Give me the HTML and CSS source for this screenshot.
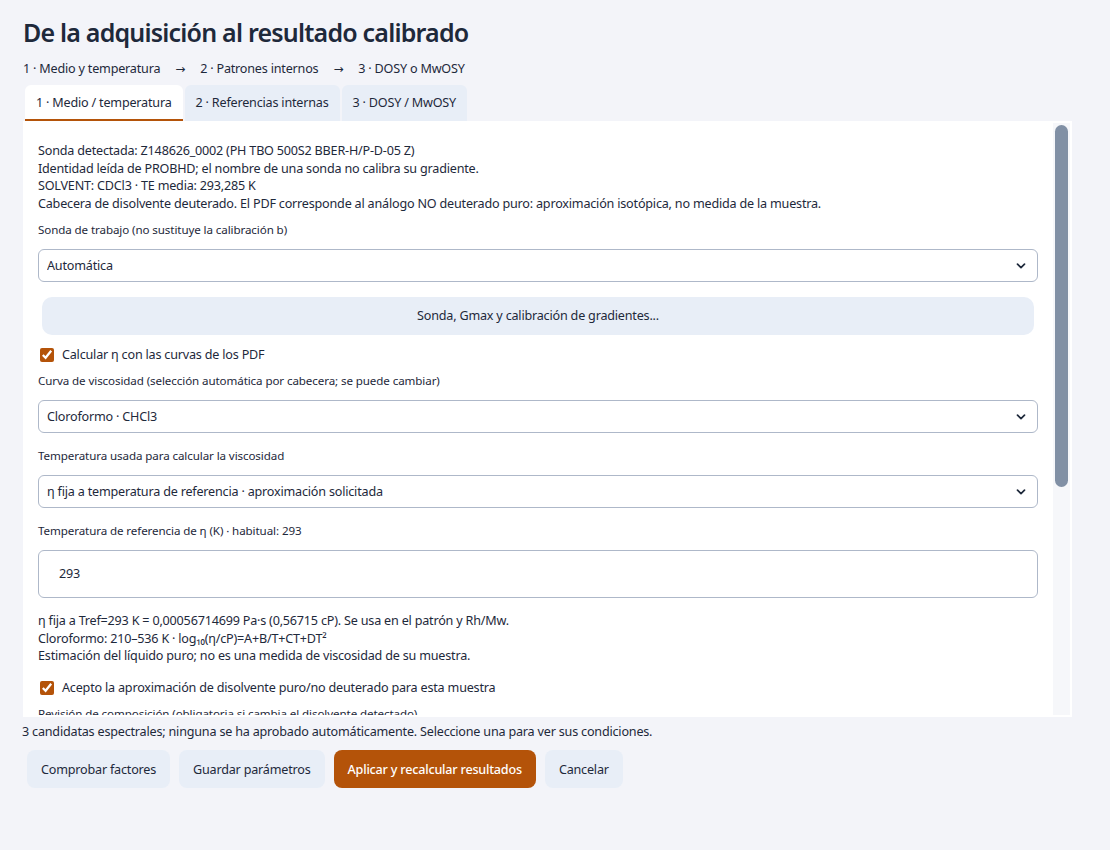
FILE: index.html
```html
<!DOCTYPE html>
<html lang="es">
<head>
<meta charset="utf-8">
<title>De la adquisición al resultado calibrado</title>
<link rel="stylesheet" href="styles.css">
</head>
<body>
<main class="page">
  <h1 class="title">De la adquisición al resultado calibrado</h1>
  <div class="steps">
    <span>1 · Medio y temperatura</span>
    <span class="arrow">→</span>
    <span>2 · Patrones internos</span>
    <span class="arrow">→</span>
    <span>3 · DOSY o MwOSY</span>
  </div>
  <nav class="tabs">
    <button class="tab tab-active">1 · Medio / temperatura</button>
    <button class="tab">2 · Referencias internas</button>
    <button class="tab">3 · DOSY / MwOSY</button>
  </nav>
  <section class="panel">
    <div class="scroll">
      <div class="info">
        <div>Sonda detectada: Z148626_0002 (PH TBO 500S2 BBER-H/P-D-05 Z)</div>
        <div>Identidad leída de PROBHD; el nombre de una sonda no calibra su gradiente.</div>
        <div>SOLVENT: CDCl3 · TE media: 293,285 K</div>
        <div>Cabecera de disolvente deuterado. El PDF corresponde al análogo NO deuterado puro: aproximación isotópica, no medida de la muestra.</div>
      </div>

      <label class="field-label first">Sonda de trabajo (no sustituye la calibración b)</label>
      <div class="select-wrap">
        <select class="select"><option>Automática</option></select>
        <svg class="chev" width="10" height="6" viewBox="0 0 10 6"><path d="M1.5 1.2l3.5 3.5 3.5-3.5" fill="none" stroke="#1e293b" stroke-width="1.7" stroke-linecap="round" stroke-linejoin="round"/></svg>
      </div>

      <button class="wide-btn">Sonda, Gmax y calibración de gradientes...</button>

      <label class="check check-1"><input type="checkbox" checked> <span>Calcular η con las curvas de los PDF</span></label>

      <label class="field-label tight">Curva de viscosidad (selección automática por cabecera; se puede cambiar)</label>
      <div class="select-wrap">
        <select class="select"><option>Cloroformo · CHCl3</option></select>
        <svg class="chev" width="10" height="6" viewBox="0 0 10 6"><path d="M1.5 1.2l3.5 3.5 3.5-3.5" fill="none" stroke="#1e293b" stroke-width="1.7" stroke-linecap="round" stroke-linejoin="round"/></svg>
      </div>

      <label class="field-label">Temperatura usada para calcular la viscosidad</label>
      <div class="select-wrap">
        <select class="select"><option>η fija a temperatura de referencia · aproximación solicitada</option></select>
        <svg class="chev" width="10" height="6" viewBox="0 0 10 6"><path d="M1.5 1.2l3.5 3.5 3.5-3.5" fill="none" stroke="#1e293b" stroke-width="1.7" stroke-linecap="round" stroke-linejoin="round"/></svg>
      </div>

      <label class="field-label">Temperatura de referencia de η (K) · habitual: 293</label>
      <input class="input" type="text" value="293">

      <div class="info note">
        <div>η fija a Tref=293 K = 0,00056714699 Pa·s (0,56715 cP). Se usa en el patrón y Rh/Mw.</div>
        <div>Cloroformo: 210–536 K · log₁₀(η/cP)=A+B/T+CT+DT²</div>
        <div>Estimación del líquido puro; no es una medida de viscosidad de su muestra.</div>
      </div>

      <label class="check check-2"><input type="checkbox" checked> <span>Acepto la aproximación de disolvente puro/no deuterado para esta muestra</span></label>

      <label class="field-label tight">Revisión de composición (obligatoria si cambia el disolvente detectado)</label>
      <div class="select-wrap">
        <select class="select"><option>Sin cambios · CDCl3</option></select>
        <svg class="chev" width="10" height="6" viewBox="0 0 10 6"><path d="M1.5 1.2l3.5 3.5 3.5-3.5" fill="none" stroke="#1e293b" stroke-width="1.7" stroke-linecap="round" stroke-linejoin="round"/></svg>
      </div>
    </div>
    <div class="track"><div class="thumb"></div></div>
  </section>
  <p class="status">3 candidatas espectrales; ninguna se ha aprobado automáticamente. Seleccione una para ver sus condiciones.</p>
  <div class="actions">
    <button class="btn">Comprobar factores</button>
    <button class="btn">Guardar parámetros</button>
    <button class="btn btn-primary">Aplicar y recalcular resultados</button>
    <button class="btn">Cancelar</button>
  </div>
</main>
</body>
</html>
```

FILE: styles.css
```css
* { box-sizing: border-box; }

html, body {
  margin: 0;
  background: #f3f4f9;
}

body {
  font-family: "Noto Sans", "Open Sans", sans-serif;
  color: #1e293b;
  font-size: 12.6px;
  letter-spacing: -0.2px;
}

.page {
  padding: 14px 38px 0 23px;
}

.title {
  margin: 0;
  font-size: 25px;
  line-height: 36px;
  font-weight: 600;
  color: #1e293b;
  letter-spacing: -0.8px;
}

.steps {
  display: flex;
  margin-top: 10px;
  line-height: 18px;
  color: #1e293b;
}

.steps .arrow {
  font-family: "DejaVu Sans", sans-serif;
  font-size: 12px;
  margin: 0 15px;
}

.tabs {
  display: flex;
  gap: 2px;
  margin-top: 7px;
  padding-left: 2px;
}

.tab {
  font: inherit;
  letter-spacing: inherit;
  color: #1e293b;
  background: #e8eef7;
  border: 0;
  border-bottom: 2px solid transparent;
  border-radius: 6px 6px 0 0;
  height: 36px;
  padding: 0 11px;
  cursor: pointer;
}

.tab-active {
  background: #ffffff;
  border-bottom-color: #b45309;
}

.panel {
  display: flex;
  background: #ffffff;
  padding: 2px 2px 2px 0;
  height: 596px;
}

.scroll {
  flex: 1;
  min-width: 0;
  overflow: hidden;
  padding: 19px 15px 20px 15px;
}

.track {
  flex: 0 0 17px;
  background: #f6f7fa;
  padding: 2px;
}

.thumb {
  height: 362px;
  background: #8190a5;
  border-radius: 7px;
}

.info {
  line-height: 17.7px;
}

.field-label {
  display: block;
  font-size: 11.6px;
  letter-spacing: -0.1px;
  line-height: 16px;
  margin: 10px 0 11px;
}

.field-label.first {
  margin-top: 9px;
}

.field-label.tight {
  margin-top: 8px;
}

.select-wrap {
  position: relative;
}

.select {
  display: block;
  width: 100%;
  height: 33px;
  appearance: none;
  -webkit-appearance: none;
  font: inherit;
  letter-spacing: inherit;
  color: #1e293b;
  background: #ffffff;
  border: 1px solid #aeb8c9;
  border-radius: 6px;
  padding: 0 30px 0 8px;
}

.chev {
  position: absolute;
  right: 12px;
  top: 14px;
  pointer-events: none;
}

.select-wrap + .field-label,
.input + .field-label {
  margin-top: 15px;
}

.wide-btn {
  display: block;
  width: calc(100% - 8px);
  margin: 15px 4px 0;
  height: 38px;
  border: 0;
  border-radius: 10px;
  background: #e8eef7;
  font: inherit;
  letter-spacing: inherit;
  color: #1e293b;
}

.check {
  display: flex;
  align-items: center;
  height: 20px;
  margin-top: 10px;
  padding-left: 2px;
}

.check input {
  margin: 0 8px 0 0;
  width: 14px;
  height: 14px;
  accent-color: #b45309;
}

.check-2 {
  margin-top: 13px;
}

.input {
  display: block;
  width: 100%;
  height: 48px;
  font: inherit;
  letter-spacing: inherit;
  color: #1e293b;
  border: 1px solid #aeb8c9;
  border-radius: 6px;
  padding: 0 20px;
}

.note {
  margin-top: 14px;
}

.status {
  margin: 6px 0 0 -1px;
  line-height: 18px;
}

.actions {
  display: flex;
  gap: 9px;
  margin-top: 9px;
  padding-left: 4px;
}

.btn {
  font: inherit;
  letter-spacing: inherit;
  color: #1e293b;
  background: #e8eef7;
  border: 0;
  border-radius: 8px;
  height: 38px;
  padding: 0 14px;
}

.btn-primary {
  background: #b45309;
  color: #ffffff;
  font-weight: 500;
}
```
